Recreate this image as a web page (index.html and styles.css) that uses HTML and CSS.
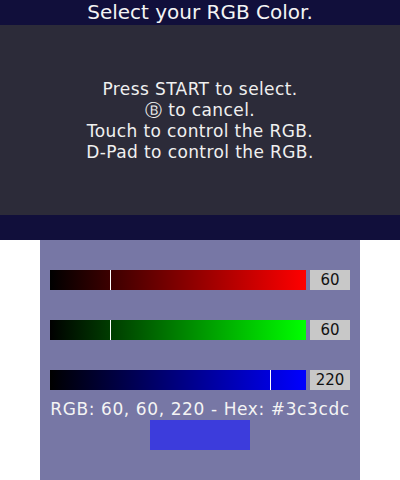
FILE: index.html
```html
<!DOCTYPE html>
<html>
<head>
<meta charset="utf-8">
<link rel="stylesheet" href="styles.css">
</head>
<body>
<div class="top">
  <div class="bar title">Select your RGB Color.</div>
  <div class="info">
    <p>Press START to select.</p>
    <p>Ⓑ to cancel.</p>
    <p>Touch to control the RGB.</p>
    <p>D-Pad to control the RGB.</p>
  </div>
  <div class="bar"></div>
</div>
<div class="bottom">
  <div class="row">
    <div class="track red"><span class="mark" style="left:60px"></span></div>
    <div class="val">60</div>
  </div>
  <div class="row">
    <div class="track green"><span class="mark" style="left:60px"></span></div>
    <div class="val">60</div>
  </div>
  <div class="row">
    <div class="track blue"><span class="mark" style="left:220px"></span></div>
    <div class="val">220</div>
  </div>
  <div class="readout">RGB: 60, 60, 220 - Hex: #3c3cdc</div>
  <div class="swatch"></div>
</div>
</body>
</html>
```
FILE: styles.css
```css
html, body {
  margin: 0;
  padding: 0;
  background: #ffffff;
}
body {
  width: 400px;
  height: 480px;
  overflow: hidden;
  font-family: "DejaVu Sans", sans-serif;
}
.top {
  width: 400px;
  height: 240px;
  display: flex;
  flex-direction: column;
  background: #2c2b39;
}
.bar {
  height: 25px;
  background: #110f3b;
  flex: none;
}
.title {
  color: #f4f4f4;
  font-size: 20px;
  line-height: 25px;
  text-align: center;
}
.info {
  flex: 1;
  display: flex;
  flex-direction: column;
  justify-content: center;
  align-items: center;
  color: #f0f0f0;
  font-size: 17px;
  letter-spacing: 0.4px;
  line-height: 21px;
  padding-top: 1px;
}
.info p {
  margin: 0;
}
.bottom {
  width: 320px;
  height: 240px;
  margin-left: 40px;
  background: #7777a5;
  box-sizing: border-box;
  padding: 30px 10px 0;
  display: flex;
  flex-direction: column;
}
.row {
  display: flex;
  gap: 4px;
  height: 20px;
  margin-bottom: 30px;
}
.row:nth-child(3) {
  margin-bottom: 0;
}
.track {
  position: relative;
  width: 256px;
  height: 20px;
}
.red { background: linear-gradient(to right, #000000, #ff0000); }
.green { background: linear-gradient(to right, #000000, #00ff00); }
.blue { background: linear-gradient(to right, #000000, #0000ff); }
.mark {
  position: absolute;
  top: 0;
  width: 1px;
  height: 20px;
  background: #ffffff;
}
.val {
  width: 40px;
  height: 20px;
  background: #c8c8c8;
  color: #111111;
  font-size: 15px;
  line-height: 20px;
  text-align: center;
}
.readout {
  height: 30px;
  color: #f4f4f4;
  font-size: 17px;
  letter-spacing: 0.6px;
  line-height: 20px;
  padding-top: 9px;
  box-sizing: border-box;
  text-align: center;
  white-space: nowrap;
}
.swatch {
  width: 100px;
  height: 30px;
  margin-left: 100px;
  background: #3c3cdc;
}
```
